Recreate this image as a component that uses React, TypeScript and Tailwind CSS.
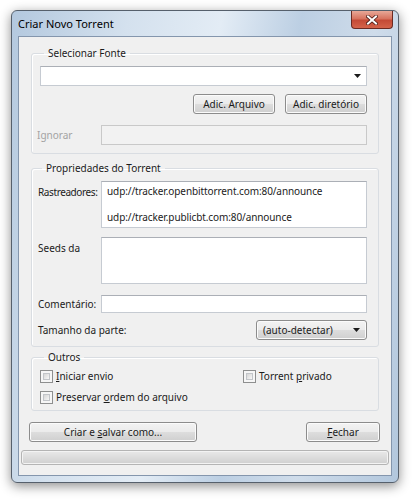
import type { ReactNode } from 'react';

const txt = "font-['Noto_Sans',sans-serif] text-[10px] text-[#1b1b1b]";

function Arrow() {
  return (
    <svg width="7" height="4" viewBox="0 0 7 4"><path d="M0 0h7L3.5 4z" fill="#1b1b1b" /></svg>
  );
}

function Btn({ children, className = '' }: { children: ReactNode; className?: string }) {
  return (
    <button className={`h-[20px] rounded-[3px] border border-[#8c8c8c] bg-[linear-gradient(#f3f3f3_0%,#ebebeb_48%,#dddddd_52%,#cfcfcf_100%)] shadow-[inset_0_0_0_1px_#fbfbfb] flex items-center justify-center ${txt} ${className}`}>
      {children}
    </button>
  );
}

function Check({ children }: { children: ReactNode }) {
  return (
    <label className={`flex items-center gap-[3px] h-[13px] leading-[13px] ${txt}`}>
      <span className="w-[13px] h-[13px] border border-[#8e8f8f] bg-[#f6f6f6] p-[2px]">
        <span className="block w-full h-full border border-[#c2c5c9] bg-[linear-gradient(135deg,#d6d6d6,#f7f7f7)]" />
      </span>
      <span>{children}</span>
    </label>
  );
}

function Group({ title, className = '', children }: { title: string; className?: string; children: ReactNode }) {
  return (
    <fieldset className={`mx-[12px] rounded-[3px] border border-[#d9dde2] shadow-[inset_1px_1px_0_#fff] ${className}`}>
      <legend className={`ml-[4px] px-[4px] leading-[16px] ${txt} text-[10.5px]`}>{title}</legend>
      {children}
    </fieldset>
  );
}

const field = 'bg-white border border-[#c6cbd2] border-t-[#abafb6]';

export default function App() {
  return (
    <div className="w-[413px] h-[500px] bg-white pt-[10px] pl-[11px]">
      <div className="w-[388px] h-[473px] rounded-[6px] border border-[#56606c] bg-[linear-gradient(100deg,#b3c8de_0%,#d4e1ee_25%,#e3ecf5_45%,#bccfe3_62%,#cfdcea_78%,#b2c7dd_100%)] shadow-[0_3px_12px_rgba(0,0,0,0.45)] px-[6px] pb-[6px] flex flex-col">
        <div className="h-[25px] flex items-start justify-between">
          <span className={`${txt} text-[11px] leading-[25px] text-black`}>Criar Novo Torrent</span>
          <button className="w-[42px] h-[18px] -mr-[1px] rounded-b-[4px] border border-t-0 border-[#6b2a22] bg-[linear-gradient(#e8a898_0%,#d7735f_45%,#c44a36_55%,#d4634a_100%)] flex items-center justify-center">
            <svg width="12" height="10" viewBox="0 0 12 10">
              <path d="M2 1.5l8 7M10 1.5l-8 7" stroke="#4a1a14" strokeWidth="3.6" strokeLinecap="square" />
              <path d="M2 1.5l8 7M10 1.5l-8 7" stroke="#fff" strokeWidth="2" strokeLinecap="square" />
            </svg>
          </button>
        </div>
        <div className="flex-1 border border-[#8496ad] bg-[#f0f0f0] flex flex-col pt-[8px]">
          <Group title="Selecionar Fonte" className="pl-[8px] pr-[11px] pt-[5px] pb-[8px]">
            <div className={`${field} h-[20px] flex items-center justify-end pr-[5px]`}>
              <Arrow />
            </div>
            <div className="mt-[8px] flex justify-end gap-[10px]">
              <Btn className="w-[82px]">Adic. Arquivo</Btn>
              <Btn className="w-[82px]">Adic. diretório</Btn>
            </div>
            <div className="mt-[11px] flex items-center">
              <span className={`${txt} text-[#a3a3a3] w-[61px] -ml-[3px]`}>Ignorar</span>
              <div className="flex-1 h-[20px] border border-[#c9c9c9] bg-[#f2f2f2] ml-[3px]" />
            </div>
          </Group>

          <Group title="Propriedades do Torrent" className="mt-[6px] pl-[6px] pr-[11px] pt-[5px] pb-[6px]">
            <div className="flex">
              <span className={`${txt} w-[63px] pt-[4px] whitespace-nowrap tracking-[-0.4px]`}>Rastreadores:</span>
              <div className={`${field} flex-1 h-[47px] px-[5px] pt-[3px] ${txt} leading-[13px] flex flex-col gap-[13px] tracking-[-0.1px]`}>
                <span>udp://tracker.openbittorrent.com:80/announce</span>
                <span>udp://tracker.publicbt.com:80/announce</span>
              </div>
            </div>
            <div className="flex mt-[9px]">
              <span className={`${txt} w-[63px] pt-[4px]`}>Seeds da</span>
              <div className={`${field} flex-1 h-[47px]`} />
            </div>
            <div className="flex items-center mt-[11px]">
              <span className={`${txt} w-[63px] whitespace-nowrap`}>Comentário:</span>
              <div className={`${field} flex-1 h-[18px]`} />
            </div>
            <div className="flex items-center justify-between mt-[7px]">
              <span className={txt}>Tamanho da parte:</span>
              <Btn className="w-[111px] !justify-between px-[6px]">
                <span>(auto-detectar)</span>
                <Arrow />
              </Btn>
            </div>
          </Group>

          <Group title="Outros" className="mt-[2px] pl-[8px] pr-[11px] pt-[5px] pb-[6px]">
            <div className="flex">
              <div className="w-[203px]">
                <Check><span className="underline underline-offset-1">I</span>niciar envio</Check>
              </div>
              <Check>Torrent <span className="underline underline-offset-1">p</span>rivado</Check>
            </div>
            <div className="mt-[8px]">
              <Check>Preservar <span className="underline underline-offset-1">o</span>rdem do arquivo</Check>
            </div>
          </Group>

          <div className="mt-[11px] ml-[10px] mr-[11px] flex justify-between">
            <Btn className="w-[168px]"><span>Criar e <span className="underline underline-offset-1">s</span>alvar como...</span></Btn>
            <Btn className="w-[74px]"><span><span className="underline underline-offset-1">F</span>echar</span></Btn>
          </div>

          <div className="mt-[8px] mx-[2px] h-[15px] rounded-[3px] border border-[#b4b4b4] bg-[linear-gradient(#e9e9e9_0%,#dcdcdc_50%,#cfcfcf_100%)] shadow-[inset_0_0_0_1px_#f3f3f3]" />
        </div>
      </div>
    </div>
  );
}
